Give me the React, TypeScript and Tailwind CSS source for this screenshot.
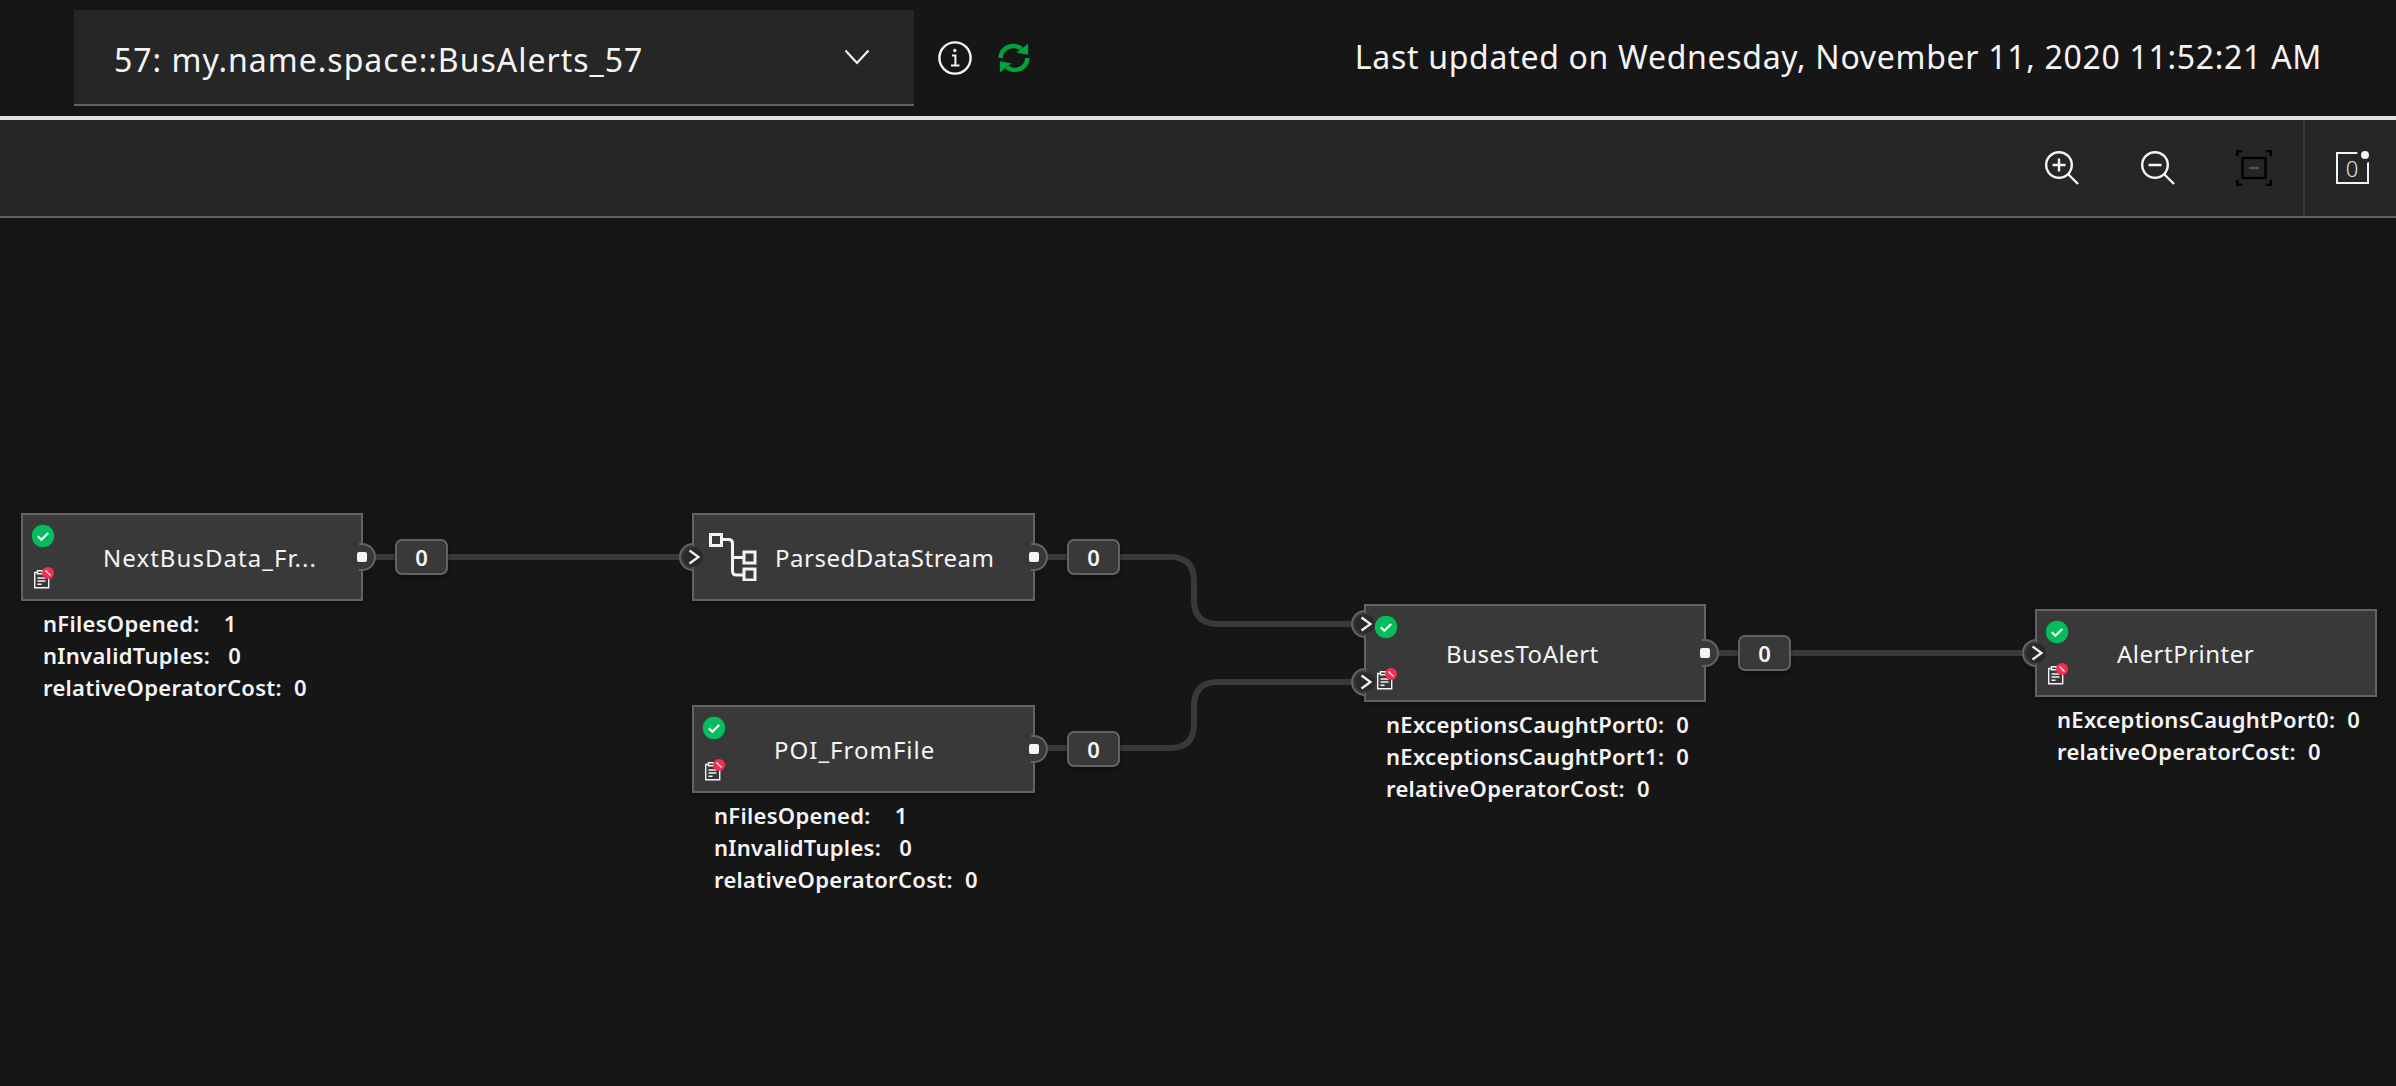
const font = "font-['Noto_Sans',sans-serif]";

function InfoIcon() {
  return (
    <svg width="36" height="36" viewBox="0 0 36 36" fill="none" stroke="#f4f4f4" strokeWidth="2.4">
      <circle cx="18" cy="18" r="15.6" />
      <path d="M15 15.5h3.4v10M14 25.5h8.5" strokeWidth="2" />
      <circle cx="17.8" cy="10.5" r="1.7" fill="#f4f4f4" stroke="none" />
    </svg>
  );
}

function RefreshIcon() {
  return (
    <svg width="34" height="34" viewBox="0 0 32 32" fill="none">
      <path d="M3.5 16C3.500 9 9 4.800 16 4.800c2.800 0 5 .8 7 2.400" stroke="#00a33b" strokeWidth="4.200" />
      <path d="M28.500 16c0 7-5.500 11.200-12.500 11.200-2.800 0-5-.8-7-2.400" stroke="#00a33b" strokeWidth="4.200" />
      <path d="M18.300 11 29.300 13V2.300Z" fill="#00a33b" />
      <path d="M13.700 21 2.700 19V29.700Z" fill="#00a33b" />
    </svg>
  );
}

function ChevronIcon() {
  return (
    <svg width="26" height="16" viewBox="0 0 26 16" fill="none" stroke="#f4f4f4" strokeWidth="2.2">
      <path d="M1.5 1.5 13 14 24.500 1.500" />
    </svg>
  );
}

function ZoomInIcon() {
  return (
    <svg width="36" height="36" viewBox="0 0 36 36" fill="none" stroke="#f4f4f4" strokeWidth="2.4">
      <circle cx="15" cy="15" r="12.8" />
      <path d="M24 24 34 34M15 8.5v13M8.5 15h13" />
    </svg>
  );
}

function ZoomOutIcon() {
  return (
    <svg width="36" height="36" viewBox="0 0 36 36" fill="none" stroke="#f4f4f4" strokeWidth="2.4">
      <circle cx="15" cy="15" r="12.8" />
      <path d="M24 24 34 34M8.5 15h13" />
    </svg>
  );
}

function FitIcon() {
  return (
    <svg width="36" height="36" viewBox="0 0 36 36" fill="none" stroke="#000000" strokeWidth="2.4">
      <path d="M1.2 6V1.2H6M30 1.2h4.800V6M34.800 30v4.800H30M6 34.800H1.200V30" />
      <rect x="6.5" y="8" width="23" height="20" />
      <path d="M13 18h10" stroke="#525252" />
    </svg>
  );
}

function StatusIcon() {
  return (
    <svg width="24" height="24" viewBox="0 0 24 24">
      <circle cx="12" cy="12" r="11.2" fill="#05bd5d" />
      <path d="M6.800 12.200 10.400 15.800 17.200 9" fill="none" stroke="#ffffff" strokeWidth="2.200" />
    </svg>
  );
}

function LogIcon() {
  return (
    <svg width="22" height="22" viewBox="0 0 22 22" fill="none" stroke="#f4f4f4" strokeWidth="1.4" className="ml-[2px]">
      <path d="M5 5.500H1.700v15.300h14V11" />
      <path d="M4.500 5.500V3.700h5v3h-5Z" />
      <path d="M4.500 11h8M4.500 14h8M4.500 17.200h4" />
      <circle cx="15" cy="6" r="6" fill="#fa2d4f" stroke="none" />
      <path d="M12.500 3.500 17.500 8.500" stroke="#ffffff" strokeWidth="1.200" />
    </svg>
  );
}

function TreeIcon() {
  return (
    <svg width="48" height="48" viewBox="0 0 48 48" fill="none" stroke="#f4f4f4" strokeWidth="3" className="shrink-0">
      <rect x="1.5" y="1.5" width="11" height="11" />
      <rect x="35" y="19" width="11" height="11" />
      <rect x="35" y="36" width="11" height="11" />
      <path d="M12.500 6.500h7q4 0 4 4V38q0 4 4 4H35M23.500 24.500H35" />
    </svg>
  );
}

function OutputPort() {
  return (
    <div className="absolute left-[calc(100%-2px)] top-1/2 flex h-[28px] w-[17px] -translate-y-1/2 items-center rounded-r-[14px] border-[2px] border-l-0 border-[#636363] bg-[#393939]">
      <div className="-ml-[2px] h-[10px] w-[10px] rounded-[2px] bg-[#f4f4f4]" />
    </div>
  );
}

// port centre sits on the node's left edge, the dark disc spills into the node
function InputPort({ className }: { className: string }) {
  return (
    <svg width="28" height="28" viewBox="0 0 28 28" fill="none" className={`absolute -left-[16px] -translate-y-1/2 ${className}`}>
      <path d="M15 1A13 13 0 0 0 15 27" fill="#393939" stroke="#636363" strokeWidth="2" />
      <circle cx="15" cy="14" r="10" fill="#2a2a2a" />
      <path d="M11.500 7.500 20.500 14 11.500 20.500" stroke="#f4f4f4" strokeWidth="2.200" />
    </svg>
  );
}

function CountBadge() {
  return (
    <div className="ml-[32px] flex h-[36px] w-[53px] shrink-0 items-center justify-center rounded-[7px] border-[2px] border-[#636363] bg-[#393939] text-[22px] font-semibold text-[#f4f4f4] shadow-[0_2px_4px_rgba(0,0,0,0.4)]">
      0
    </div>
  );
}

function Metrics({ rows }: { rows: string[] }) {
  return (
    <div className="mt-[6px] flex flex-col pl-[22px] text-[22px] font-semibold leading-[32px] tracking-[0.3px] whitespace-pre text-[#f4f4f4]">
      {rows.map((r) => (
        <span key={r}>{r}</span>
      ))}
    </div>
  );
}

type NodeProps = {
  name: string;
  className: string;
  boxClass?: string;
  titleClass?: string;
  tree?: boolean;
  ports?: string[];
  output?: boolean;
  metrics?: string[];
};

function FlowNode({
  name,
  className,
  boxClass = "h-[88px] w-[342px]",
  titleClass = "tracking-[0.5px]",
  tree,
  ports = [],
  output = true,
  metrics,
}: NodeProps) {
  return (
    <div className={`absolute flex flex-col ${className}`}>
      <div className="flex items-center">
        <div className={`relative flex shrink-0 items-center border-[2px] border-[#636363] bg-[#393939] shadow-[0_2px_6px_rgba(0,0,0,0.4)] ${boxClass}`}>
          {tree ? (
            <div className="flex items-center gap-[18px] pl-[15px]">
              <TreeIcon />
            </div>
          ) : (
            <div className="ml-[8px] flex h-full w-[26px] shrink-0 flex-col items-start justify-between pb-[10px] pt-[9px]">
              <StatusIcon />
              <LogIcon />
            </div>
          )}
          <span className={`whitespace-nowrap pt-[2px] text-[24px] leading-[32px] text-[#f4f4f4] ${titleClass} ${tree ? "ml-[18px]" : "ml-[46px]"}`}>
            {name}
          </span>
          {ports.map((p) => (
            <InputPort key={p} className={p} />
          ))}
          {output && <OutputPort />}
        </div>
        {output && <CountBadge />}
      </div>
      {metrics && <Metrics rows={metrics} />}
    </div>
  );
}

function Edges() {
  return (
    <svg width="2396" height="868" viewBox="0 218 2396 868" fill="none" stroke="#393939" strokeWidth="6" className="absolute left-0 top-0">
      <path d="M363 557H692" />
      <path d="M1035 557H1170q24 0 24 24v19q0 24 24 24H1364" />
      <path d="M1035 748H1170q24 0 24-24v-18q0-24 24-24H1364" />
      <path d="M1706 653H2035" />
    </svg>
  );
}

export default function App() {
  return (
    <div className={`flex h-screen w-screen flex-col overflow-hidden bg-[#161616] ${font}`}>
      <header className="flex h-[116px] shrink-0 items-center pl-[74px] pr-[74px]">
        <div className="flex h-[96px] w-[840px] items-center justify-between border-b-[2px] border-[#636363] bg-[#262626] pl-[40px] pr-[44px]">
          <span className="pt-[5px] text-[32px] tracking-[1px] text-[#f4f4f4]">57: my.name.space::BusAlerts_57</span>
          <ChevronIcon />
        </div>
        <div className="ml-[23px] flex items-center gap-[24px]">
          <InfoIcon />
          <RefreshIcon />
        </div>
        <div className="ml-auto pb-[3px] text-[32px] tracking-[0.7px] text-[#f4f4f4]">
          Last updated on Wednesday, November 11, 2020 11:52:21 AM
        </div>
      </header>
      <div className="h-[4px] shrink-0 bg-[#e0e0e0]" />
      <div className="flex h-[98px] shrink-0 items-stretch justify-end border-b-[2px] border-[#636363] bg-[#262626]">
        <div className="flex items-center gap-[60px] pr-[31px]">
          <ZoomInIcon />
          <ZoomOutIcon />
          <FitIcon />
        </div>
        <div className="flex w-[93px] items-center justify-center border-l-[2px] border-[#393939] pl-[3px]">
          <div className="relative flex h-[32px] w-[33px] items-center justify-center border-[2px] border-[#f4f4f4] text-[22px] font-light leading-none text-[#e0e0e0]">
            0
            <div className="absolute left-[19px] top-[-7px] h-[16px] w-[16px] rounded-full border-[4px] border-[#262626] bg-[#f4f4f4]" />
          </div>
        </div>
      </div>

      <main className="relative flex-1">
        <Edges />
        <FlowNode
          name="NextBusData_Fr..."
          className="left-[21px] top-[295px]"
          titleClass="tracking-[1.05px]"
          metrics={["nFilesOpened:    1", "nInvalidTuples:   0", "relativeOperatorCost:  0"]}
        />
        <FlowNode name="ParsedDataStream" className="left-[692px] top-[295px]" boxClass="h-[88px] w-[343px]" tree ports={["top-[42px]"]} />
        <FlowNode
          name="POI_FromFile"
          className="left-[692px] top-[487px]"
          boxClass="h-[88px] w-[343px]"
          titleClass="tracking-[1px]"
          metrics={["nFilesOpened:    1", "nInvalidTuples:   0", "relativeOperatorCost:  0"]}
        />
        <FlowNode
          name="BusesToAlert"
          className="left-[1364px] top-[386px]"
          boxClass="h-[98px] w-[342px]"
          ports={["top-[18px]", "top-[76px]"]}
          metrics={["nExceptionsCaughtPort0:  0", "nExceptionsCaughtPort1:  0", "relativeOperatorCost:  0"]}
        />
        <FlowNode
          name="AlertPrinter"
          className="left-[2035px] top-[391px]"
          ports={["top-[42px]"]}
          output={false}
          metrics={["nExceptionsCaughtPort0:  0", "relativeOperatorCost:  0"]}
        />
      </main>
    </div>
  );
}
